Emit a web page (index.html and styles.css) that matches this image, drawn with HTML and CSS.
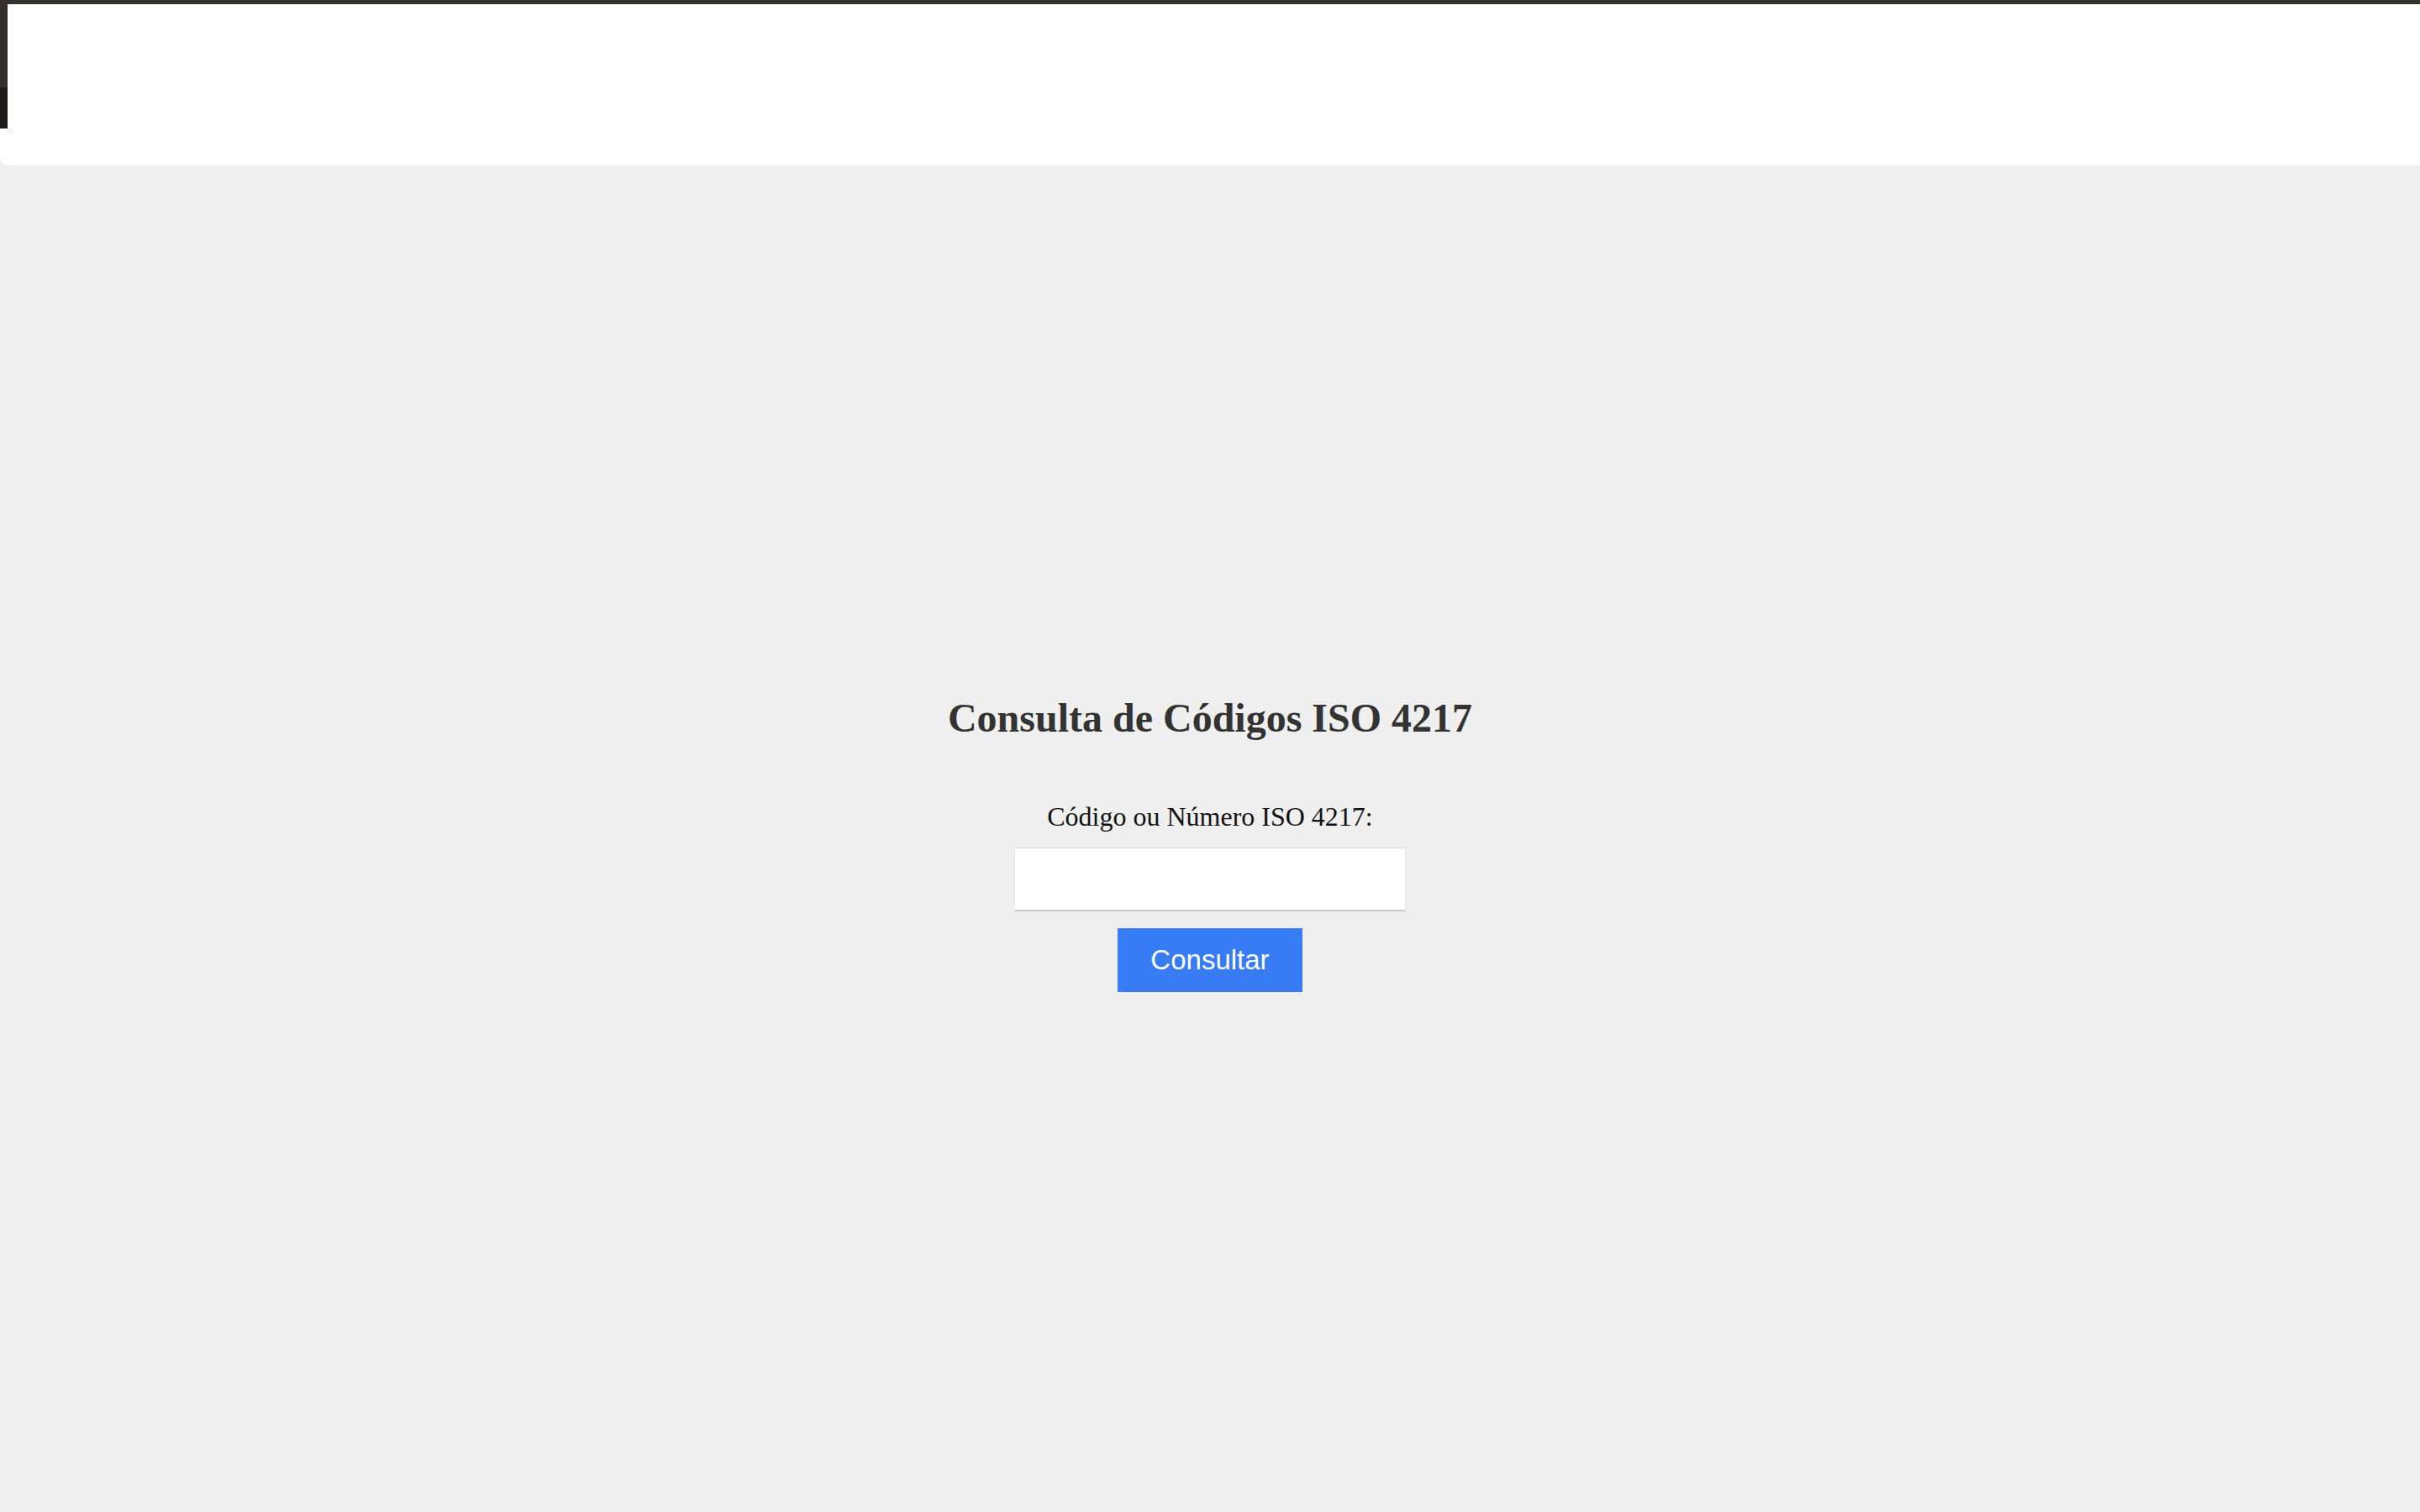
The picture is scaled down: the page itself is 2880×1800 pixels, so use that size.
FILE: index.html
```html
<!DOCTYPE html>
<html lang="pt">
<head>
<meta charset="utf-8">
<title>Consulta de Códigos ISO 4217</title>
<link rel="stylesheet" href="styles.css">
</head>
<body>
<header class="topbar">
  <div class="topbar-strip"></div>
  <div class="topbar-panel"></div>
</header>
<main class="main">
  <section class="lookup">
    <h2 class="lookup-title">Consulta de Códigos ISO 4217</h2>
    <form class="lookup-form">
      <label class="lookup-label" for="codigo">Código ou Número ISO 4217:</label>
      <input class="lookup-input" id="codigo" type="text">
      <button class="lookup-button" type="button">Consultar</button>
    </form>
  </section>
</main>
</body>
</html>
```

FILE: styles.css
```css
* { box-sizing: border-box; }
html, body { margin: 0; padding: 0; }
body {
  background: #efefef;
  height: 100vh;
  display: flex;
  flex-direction: column;
  font-family: "Liberation Serif", "Times New Roman", serif;
}
.topbar {
  position: relative;
  height: 197px;
  flex: none;
  border-top: 5px solid #35302c;
}
.topbar-panel {
  height: 100%;
  background: #ffffff;
  border-bottom-left-radius: 10px;
}
.topbar-strip {
  position: absolute;
  left: 0;
  top: 0;
  width: 9px;
  height: 148px;
  background: linear-gradient(#35302c 0, #35302c 99px, #1f1d1b 99px);
}
.main {
  flex: 1;
  display: flex;
  align-items: center;
  justify-content: center;
  padding-top: 6px;
}
.lookup {
  display: flex;
  flex-direction: column;
  align-items: center;
}
.lookup-title {
  margin: 0;
  font-size: 48px;
  line-height: 66px;
  font-weight: bold;
  color: #333333;
}
.lookup-form {
  display: flex;
  flex-direction: column;
  align-items: center;
  margin-top: 64px;
}
.lookup-label {
  font-size: 32px;
  line-height: 40px;
  color: #111111;
}
.lookup-input {
  margin-top: 17px;
  width: 466px;
  height: 76px;
  background: #ffffff;
  border: none;
  border-top: 1px solid #dcdcdc;
  border-left: 1px solid #e8e8e8;
  border-right: 1px solid #e8e8e8;
  border-bottom: 2px solid #c6c6c6;
  outline: none;
  font-size: 30px;
}
.lookup-button {
  margin-top: 20px;
  width: 220px;
  height: 76px;
  border: none;
  background: #377bf5;
  color: #ffffff;
  font-family: "Liberation Sans", Arial, sans-serif;
  font-size: 33px;
  padding: 0;
}
```
